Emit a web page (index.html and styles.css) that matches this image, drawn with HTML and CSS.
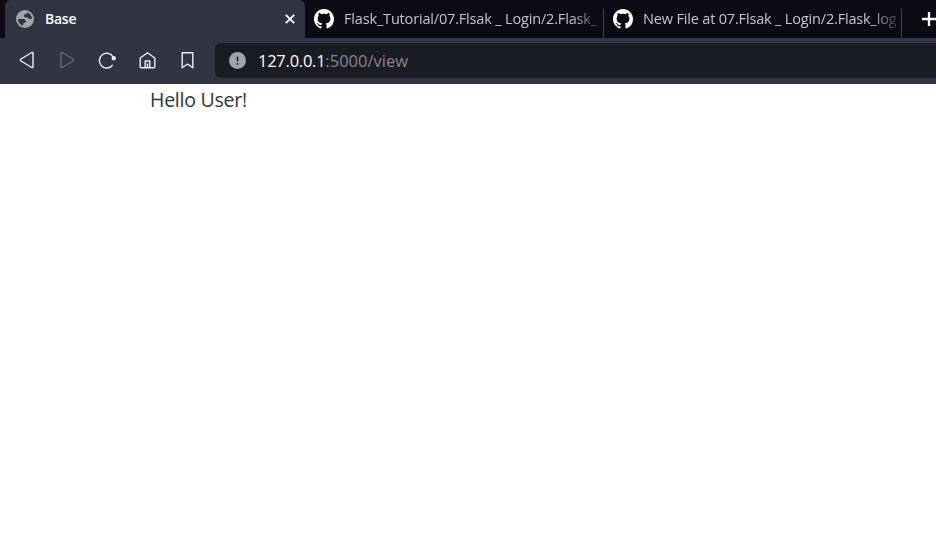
FILE: index.html
```html
<!DOCTYPE html>
<html lang="en">
<head>
<meta charset="utf-8">
<title>Base</title>
<link rel="stylesheet" href="styles.css">
</head>
<body>
<svg class="defs" width="0" height="0">
  <symbol id="github" viewBox="0 0 16 16">
    <path fill="#fff" d="M8 0C3.58 0 0 3.58 0 8c0 3.54 2.29 6.53 5.47 7.59.4.07.55-.17.55-.38 0-.19-.01-.82-.01-1.49-2.01.37-2.53-.49-2.69-.94-.09-.23-.48-.94-.82-1.13-.28-.15-.68-.52-.01-.53.63-.01 1.08.58 1.23.82.72 1.21 1.87.87 2.33.66.07-.52.28-.87.51-1.07-1.78-.2-3.64-.89-3.64-3.95 0-.87.31-1.59.82-2.15-.08-.2-.36-1.02.08-2.12 0 0 .67-.21 2.2.82.64-.18 1.32-.27 2-.27s1.36.09 2 .27c1.53-1.04 2.2-.82 2.2-.82.44 1.1.16 1.92.08 2.12.51.56.82 1.27.82 2.15 0 3.07-1.87 3.75-3.65 3.95.29.25.54.73.54 1.48 0 1.07-.01 1.93-.01 2.2 0 .21.15.46.55.38A8.01 8.01 0 0 0 16 8c0-4.42-3.58-8-8-8z"/>
  </symbol>
</svg>
<header>
  <div class="tabs">
    <div class="tab active">
      <svg class="globe" width="18" height="18" viewBox="0 0 18 18"><circle cx="9" cy="9" r="9" fill="#a2a5ad"/><path fill="#313543" d="M10.800 2.200C14 3 16 5.700 16 8.600c-.8.700-2.300.8-3.300.1-.7-.5-.7-1.200-1.700-1.200-1.600 0-3.200-.2-3.200-1.700 0-1.300 1-1.500 2-1.600.9-.1 1-.8 1-2zM2 9h4.500c1.800 0 3.500.6 3.500 2.200 0 1.400-1 1.500-2 1.600-.8.100-.8 1.300-.8 2.900C4 15 2 12 2 9z"/></svg>
      <span class="title">Base</span>
      <svg class="close" width="10" height="10" viewBox="0 0 10 10"><path d="m.8.8 8.400 8.400M9.200.8.8 9.200" stroke="#fff" stroke-width="1.800"/></svg>
    </div>
    <div class="tab">
      <svg class="mark" width="20" height="20"><use href="#github"/></svg>
      <span class="title faded">Flask_Tutorial/07.Flsak _ Login/2.Flask_</span>
    </div>
    <div class="tab">
      <svg class="mark" width="20" height="20"><use href="#github"/></svg>
      <span class="title faded">New File at 07.Flsak _ Login/2.Flask_log</span>
    </div>
    <svg class="add" width="14" height="14" viewBox="0 0 14 14"><path d="M7 0v14M0 7h14" stroke="#fff" stroke-width="2.300"/></svg>
  </div>
  <nav class="toolbar">
    <div class="buttons">
      <svg width="20" height="20" viewBox="0 0 20 20"><path d="M14.800 2.500q1.200-.5 1.200.8v13.400q0 1.300-1.200.8L4 11q-1.200-1 0-2z"/></svg>
      <svg class="disabled" width="20" height="20" viewBox="0 0 20 20"><path d="M5.200 2.500Q4 2 4 3.300v13.400q0 1.300 1.200.8L16 11q1.200-1 0-2z"/></svg>
      <svg width="20" height="20" viewBox="0 0 20 20"><path d="M15.700 15A7.400 7.400 0 1 1 16.200 7"/><circle cx="16.700" cy="8.300" r="1.500" class="dot"/></svg>
      <svg width="20" height="20" viewBox="0 0 20 20"><path d="M3.200 8 10.500 2.700 17.800 8v8.700q0 1-1 1H4.200q-1 0-1-1zM8.200 17.500V11h4.600v6.500M10.500 13.500v4"/></svg>
      <svg width="20" height="20" viewBox="0 0 20 20"><path d="M5.200 2.700h10.600v15L10.500 14l-5.300 3.700z"/></svg>
    </div>
    <div class="address">
      <svg width="17" height="17" viewBox="0 0 17 17"><circle cx="8.500" cy="8.500" r="8.500" fill="#a0a3a9"/><path d="M8.500 4.500v4.800M8.500 11v1.700" stroke="#191c22" stroke-width="1.500"/></svg>
      <span class="url"><span class="host">127.0.0.1</span><span class="path">:5000/view</span></span>
    </div>
  </nav>
</header>
<main>Hello User!</main>
</body>
</html>
```
FILE: styles.css
```css
* { box-sizing: border-box; }
body { margin: 0; height: 543px; overflow: hidden; background: #fff; font-family: "Open Sans", "Noto Sans", sans-serif; }
.defs { position: absolute; }
svg { flex: none; display: block; }
.tabs { display: flex; align-items: flex-start; height: 38px; padding-left: 5px; background: #0b0b16; overflow: hidden; }
.tab { flex: none; display: flex; align-items: center; width: 299px; height: 38px; position: relative; color: #c3c4cb; font-size: 14.500px; }
.tab.active { width: 300px; padding: 0 10px 0 11px; background: #313543; border-radius: 6px 6px 0 0; color: #fff; font-weight: 600; }
.tab:not(.active) { padding-left: 9px; }
.tab:last-of-type { width: 298px; }
.tab:not(.active)::after { content: ""; position: absolute; right: 0; top: 9px; bottom: 0; width: 1px; background: #41434c; }
.title { line-height: 20px; white-space: nowrap; }
.active .title { flex: 1; margin-left: 11px; font-size: 14px; letter-spacing: -.25px; }
.faded { margin-left: 10px; letter-spacing: -.17px; -webkit-mask-image: linear-gradient(to right, #000 90%, rgba(0, 0, 0, .25)); mask-image: linear-gradient(to right, #000 90%, rgba(0, 0, 0, .25)); }
.add { margin: 12px 0 0 20px; }
.toolbar { display: flex; height: 46px; padding: 5px 0 6px 17px; background: #313543; }
.buttons { display: flex; align-items: center; gap: 20px; width: 198px; padding-bottom: 1px; }
.buttons svg { fill: none; stroke: #eeeff4; stroke-width: 1.400; stroke-linejoin: round; }
.buttons .disabled { stroke: #666975; }
.buttons .dot { fill: #eeeff4; }
.address { flex: 1; display: flex; align-items: center; padding-left: 14px; background: #191c22; border-radius: 5px 0 0 5px; }
.url { margin-left: 12px; font-size: 16.500px; line-height: 24px; letter-spacing: -.25px; color: #fff; white-space: nowrap; }
.url .path { color: #85878d; letter-spacing: 0; }
main { padding: 1px 0 0 150px; font-size: 19.500px; line-height: 30px; letter-spacing: -.25px; color: #30343a; }
```
